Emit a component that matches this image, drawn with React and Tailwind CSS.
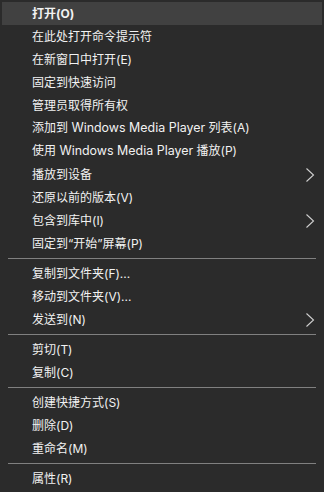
import React from "react";

const WMP = () => <span className="text-[12.45px]">Windows Media Player</span>;

const groups = [
  [
    { id: "open", label: "打开(O)", bold: true, active: true },
    { id: "cmd", label: "在此处打开命令提示符" },
    { id: "newwin", label: "在新窗口中打开(E)" },
    { id: "pin", label: "固定到快速访问" },
    { id: "owner", label: "管理员取得所有权" },
    { id: "wmpadd", label: <>添加到 <WMP /> 列表(A)</> },
    { id: "wmpplay", label: <>使用 <WMP /> 播放(P)</> },
    { id: "cast", label: "播放到设备", sub: true },
    { id: "restore", label: "还原以前的版本(V)" },
    { id: "lib", label: "包含到库中(I)", sub: true },
    { id: "start", label: "固定到“开始”屏幕(P)" },
  ],
  [
    { id: "copyto", label: "复制到文件夹(F)..." },
    { id: "moveto", label: "移动到文件夹(V)..." },
    { id: "sendto", label: "发送到(N)", sub: true },
  ],
  [
    { id: "cut", label: "剪切(T)" },
    { id: "copy", label: "复制(C)" },
  ],
  [
    { id: "shortcut", label: "创建快捷方式(S)" },
    { id: "delete", label: "删除(D)" },
    { id: "rename", label: "重命名(M)" },
  ],
  [{ id: "props", label: "属性(R)" }],
];

const Chevron = () => (
  <svg width="10" height="16" viewBox="0 0 10 16" className="text-[#d0d0d0]">
    <path d="M1.5 1.5 L8.5 8 L1.5 14.5" fill="none" stroke="currentColor" strokeWidth="1.1" />
  </svg>
);

const Item = ({ label, bold, active, sub }) => (
  <div
    className={`h-[23px] flex items-center pl-[30px] pr-[7px] ${active ? "bg-[#414141]" : ""}`}
  >
    <span className={`flex-1 text-[12px] leading-none text-[#f2f2f2] whitespace-nowrap ${bold ? "font-bold" : ""}`}>
      {label}
    </span>
    {sub && <Chevron />}
  </div>
);

export default function App() {
  return (
    <div
      className="w-[324px] h-[492px] bg-[#2b2b2b] p-[2px] overflow-hidden"
      style={{ fontFamily: 'Inter, "Noto Sans CJK SC", sans-serif' }}
    >
      {groups.map((g, i) => (
        <div key={i}>
          {i > 0 && (
            <div className="py-[3px] pl-[6px] pr-[6px]">
              <div className="h-px bg-[#808080]" />
            </div>
          )}
          {g.map((it) => (
            <Item key={it.id} {...it} />
          ))}
        </div>
      ))}
    </div>
  );
}
